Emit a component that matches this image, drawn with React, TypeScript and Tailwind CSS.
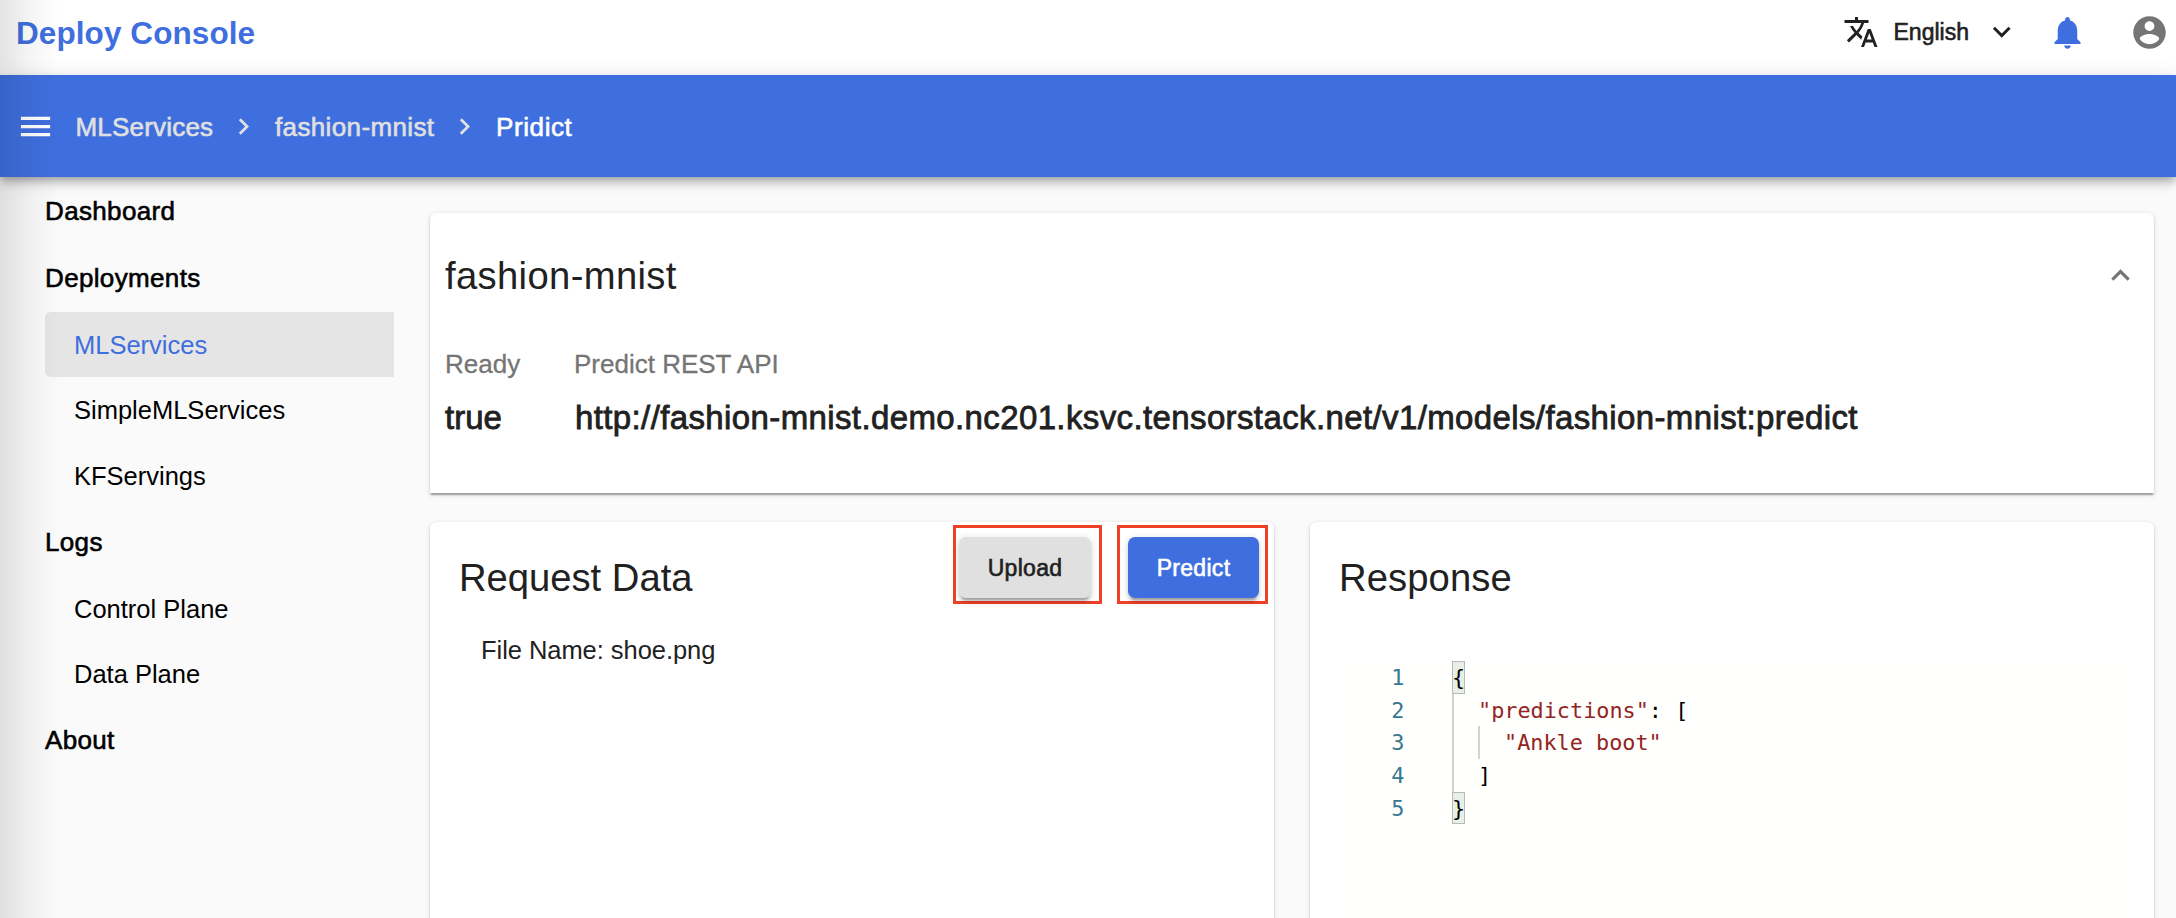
import React from "react";

const PATHS = {
  menu: "M3 18h18v-2H3v2zm0-5h18v-2H3v2zm0-7v2h18V6H3z",
  translate:
    "M12.87 15.07l-2.54-2.51.03-.03c1.74-1.94 2.98-4.17 3.71-6.53H17V4h-7V2H8v2H1v1.99h11.17C11.5 7.92 10.44 9.75 9 11.35 8.07 10.32 7.3 9.19 6.69 8h-2c.73 1.63 1.73 3.17 2.98 4.56l-5.09 5.02L4 19l5-5 3.11 3.11.76-2.04zM18.5 10h-2L12 22h2l1.12-3h4.75L21 22h2l-4.5-12zm-2.62 7l1.62-4.33L19.12 17h-3.24z",
  expandMore: "M16.59 8.59L12 13.17 7.41 8.59 6 10l6 6 6-6z",
  expandLess: "M12 8l-6 6 1.41 1.41L12 10.83l4.59 4.58L18 14z",
  next: "M10 6L8.59 7.41 13.17 12l-4.58 4.59L10 18l6-6z",
  bell: "M12 22c1.1 0 2-.9 2-2h-4c0 1.1.89 2 2 2zm6-6v-5c0-3.07-1.64-5.64-4.5-6.32V4c0-.83-.67-1.5-1.5-1.5s-1.5.67-1.5 1.5v.68C7.63 5.36 6 7.92 6 11v5l-2 2v1h16v-1l-2-2z",
  account:
    "M12 2C6.48 2 2 6.48 2 12s4.48 10 10 10 10-4.48 10-10S17.52 2 12 2zm0 3c1.66 0 3 1.34 3 3s-1.34 3-3 3-3-1.34-3-3 1.34-3 3-3zm0 14.2c-2.5 0-4.71-1.28-6-3.22.03-1.99 4-3.08 6-3.08 1.99 0 5.97 1.09 6 3.08-1.29 1.94-3.5 3.22-6 3.22z",
};

function Icon({ name, className }: { name: keyof typeof PATHS; className: string }) {
  return (
    <svg viewBox="0 0 24 24" fill="currentColor" className={`shrink-0 ${className}`} aria-hidden="true">
      <path d={PATHS[name]} />
    </svg>
  );
}

const MEDIUM = "[-webkit-text-stroke:0.6px_currentColor]";
const CARD =
  "bg-white shadow-[0_3.6px_1.8px_-1.8px_rgba(0,0,0,0.2),0_1.8px_1.8px_0_rgba(0,0,0,0.14),0_1.8px_5.4px_0_rgba(0,0,0,0.12)]";
const BUTTON =
  "flex h-[61px] items-center justify-center rounded-[7px] pt-[2px] text-[23px] tracking-[0.3px] shadow-[0_5.4px_1.8px_-3.6px_rgba(0,0,0,0.2),0_3.6px_3.6px_0_rgba(0,0,0,0.14),0_1.8px_9px_0_rgba(0,0,0,0.12)]";

function Header() {
  return (
    <header className="flex h-[75px] bg-white pl-[15px] text-[#212121]">
      <h1 className="mt-[15px] pl-px text-[31.5px] leading-[36px] font-bold tracking-[0.08px] text-[#3f6fde]">Deploy Console</h1>
      <div className="ml-auto flex h-[63px] items-center">
        <Icon name="translate" className="size-[36px]" />
        <span className={`ml-[15px] w-[76px] pt-px text-[23px] leading-[64px] ${MEDIUM}`}>English</span>
        <Icon name="expandMore" className="ml-[14px] size-[35.5px]" />
        <Icon name="bell" className="mt-[2px] ml-[29px] size-[39px] text-[#3f6fde]" />
        <Icon name="account" className="mt-[1px] mr-[7px] ml-[43px] size-[39px] text-[#757575]" />
      </div>
    </header>
  );
}

function Breadcrumb() {
  const crumb = `pt-[2px] text-[26px] whitespace-nowrap ${MEDIUM}`;
  return (
    <nav
      className={`relative z-10 flex h-[102px] items-center bg-[#3f6fde] pl-[16px] text-[#e0e0e0] shadow-[0_3.6px_7.2px_-1.8px_rgba(0,0,0,0.2),0_7.2px_9px_0_rgba(0,0,0,0.14),0_1.8px_18px_0_rgba(0,0,0,0.12)]`}
    >
      <Icon name="menu" className="size-[39px] text-white" />
      <span className={`ml-[20.5px] w-[137.5px] tracking-[0.2px] ${crumb}`}>MLServices</span>
      <Icon name="next" className="ml-[14px] size-[33px]" />
      <span className={`ml-[15px] w-[161px] tracking-[0.37px] ${crumb}`}>fashion-mnist</span>
      <Icon name="next" className="ml-[12px] size-[33px]" />
      <span className={`ml-[15px] tracking-[0.6px] text-white ${crumb}`}>Pridict</span>
    </nav>
  );
}

function Sidebar() {
  const group = `flex items-center text-[26px] tracking-[0.35px] ${MEDIUM}`;
  const item = "flex items-center pl-[29px] text-[25.5px]";
  return (
    <aside className="w-[394px] shrink-0 pl-[45px] text-black">
      <div className={`${group} h-[67px] pt-[2px]`}>Dashboard</div>
      <div className={`${group} h-[67px] pt-[2px]`}>Deployments</div>
      <div className={`${item} mt-[1px] h-[65px] rounded-l-[6px] bg-[#e5e5e5] pt-[2px] text-[#3f6fde]`}>MLServices</div>
      <div className={`${item} h-[67px]`}>SimpleMLServices</div>
      <div className={`${item} h-[65px]`}>KFServings</div>
      <div className={`${group} h-[66px]`}>Logs</div>
      <div className={`${item} h-[68px]`}>Control Plane</div>
      <div className={`${item} h-[62px]`}>Data Plane</div>
      <div className={`${group} h-[69px] pt-[2px]`}>About</div>
    </aside>
  );
}

function Summary() {
  return (
    <section className={`${CARD} h-[280px] rounded-t-[6px] pl-[15px]`}>
      <div className="flex items-start justify-between">
        <h2 className="mt-[41px] text-[38.2px] leading-[44px] tracking-[0.36px]">fashion-mnist</h2>
        <Icon name="expandLess" className="mt-[44px] mr-[15.5px] size-[37px] text-[#757575]" />
      </div>
      <div className="mt-[51px] flex">
        <div className="w-[129px]">
          <div className="text-[26px] leading-[30px] text-[#757575] [-webkit-text-stroke:0.3px_currentColor]">Ready</div>
          <div className="mt-[20px] text-[33px] leading-[38px] [-webkit-text-stroke:0.8px_currentColor]">true</div>
        </div>
        <div className="whitespace-nowrap">
          <div className="text-[26px] leading-[30px] text-[#757575] [-webkit-text-stroke:0.3px_currentColor]">
            Predict REST API
          </div>
          <div className="mt-[20px] pl-px text-[33px] leading-[38px] tracking-[0.38px] [-webkit-text-stroke:0.8px_currentColor]">
            http://fashion-mnist.demo.nc201.ksvc.tensorstack.net/v1/models/fashion-mnist:predict
          </div>
        </div>
      </div>
    </section>
  );
}

function RequestData() {
  return (
    <section className={`${CARD} w-[844px] rounded-t-[6px] pl-[29px]`}>
      <div className="flex h-[95px] items-start pt-[3px] pr-[6px]">
        <h2 className="mt-[31px] text-[38.2px] leading-[44px]">Request Data</h2>
        <div className="ml-auto h-[79px] w-[149px] border-3 border-[#ee4128] pt-[9px] pl-[3px]">
          <button className={`${BUTTON} w-[132px] bg-[#e0e0e0] text-[#212121] ${MEDIUM}`}>Upload</button>
        </div>
        <div className="ml-[15px] h-[79px] w-[151px] border-3 border-[#ee4128] pt-[9px] pl-[8px]">
          <button className={`${BUTTON} w-[131px] bg-[#3f6fde] text-white ${MEDIUM}`}>Predict</button>
        </div>
      </div>
      <p className="mt-[18px] pl-[22px] text-[25.5px] leading-[30px] tracking-[-0.05px]">File Name: shoe.png</p>
    </section>
  );
}

const bracket = "inline-block h-[32.7px] w-[13px] bg-[#e7efe7] outline outline-[#b9b9b9] -outline-offset-1";
const guide = "border-l-2 border-[#d3d3d3] pl-[24px]";

const LINES: React.ReactNode[] = [
  <span className={bracket}>{"{"}</span>,
  <span className={`flex h-full ${guide}`}>
    <span className="text-[#942422]">"predictions"</span>
    <span className="whitespace-pre">: [</span>
  </span>,
  <span className={`flex h-full ${guide}`}>
    <span className={`text-[#942422] ${guide}`}>"Ankle boot"</span>
  </span>,
  <span className={`flex h-full ${guide}`}>]</span>,
  <span className={bracket}>{"}"}</span>,
];

function Response() {
  return (
    <section className={`${CARD} w-[844px] rounded-t-[6px] pl-[28px]`}>
      <h2 className="pt-[34px] pl-px text-[38.2px] leading-[44px] tracking-[0.1px]">Response</h2>
      <div className="mt-[61px] mr-[28px] h-[280px] bg-[#fffffe] font-['DejaVu_Sans_Mono',monospace] text-[21.84px] leading-[34px] text-black">
        {LINES.map((line, i) => (
          <div key={i} className="flex h-[32.7px]">
            <span className="w-[66.5px] text-right text-[#367891]">{i + 1}</span>
            <span className="ml-[47.5px] block whitespace-nowrap">{line}</span>
          </div>
        ))}
      </div>
    </section>
  );
}

export default function App() {
  return (
    <div className="relative flex h-[918px] w-[2176px] flex-col overflow-hidden bg-[#fafafa] font-['Liberation_Sans',Arial,sans-serif] text-[#212121]">
      <Header />
      <Breadcrumb />
      <div className="flex min-h-0 flex-1">
        <Sidebar />
        <main className="flex h-[790px] flex-1 flex-col pt-[36px] pr-[22px] pl-[36px]">
          <Summary />
          <div className="mt-[29px] flex flex-1 gap-[36px]">
            <RequestData />
            <Response />
          </div>
        </main>
      </div>
      <div className="pointer-events-none absolute inset-y-0 left-0 z-20 w-[60px] bg-linear-to-r from-black/11 via-black/4 to-transparent" />
    </div>
  );
}
